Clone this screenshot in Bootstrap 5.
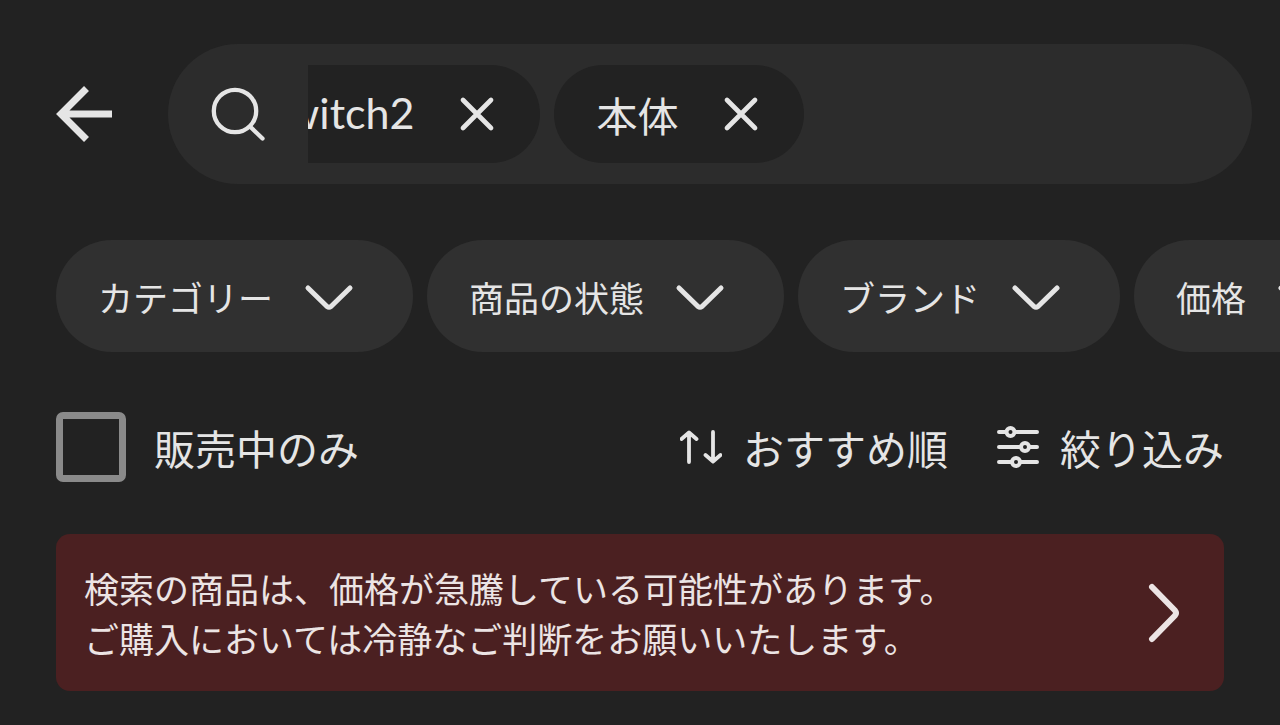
<!DOCTYPE html>
<html lang="ja">
<head>
<meta charset="utf-8">
<meta name="viewport" content="width=device-width, initial-scale=1">
<title>検索結果</title>
<link href="https://cdn.jsdelivr.net/npm/bootstrap@5.3.0/dist/css/bootstrap.min.css" rel="stylesheet">
<style>
  :root { --page: #222; --ink: #e5e5e5; --field: #2c2c2c; --pill: #303030; }
  body { background: var(--page); color: var(--ink); font-family: "Noto Sans CJK JP", sans-serif; font-size: 41px; line-height: 56px; }
  .plain { background: none; border: 0; padding: 0; color: inherit; white-space: nowrap; }
  svg { display: block; flex: none; fill: none; stroke: currentColor; stroke-linecap: round; stroke-linejoin: round; }
  .sharp { stroke-linecap: butt; stroke-linejoin: miter; }
  .topbar { padding: 44px 28px 0 56px; gap: 56px; }
  .search-field { background: var(--field); height: 140px; padding: 0 42px; gap: 42px; min-width: 0; }
  .terms { gap: 14px; overflow: hidden; min-width: 0; }
  .term { background: var(--page); height: 98px; padding: 0 35px 0 42px; gap: 35px; flex: none; }
  .term:first-child { margin-left: -87px; }
  .latin { font-family: Lato, "Noto Sans CJK JP", sans-serif; font-size: 43px; padding-bottom: 2px; }
  .query { background: none; border: 0; outline: 0; color: inherit; min-width: 0; }
  .filters { margin-top: 56px; padding-left: 56px; gap: 14px; overflow: hidden; }
  .filter { background: var(--pill); height: 112px; padding: 2px 56px 0 42px; gap: 28px; font-size: 35px; flex: none; }
  .tools { margin-top: 60px; padding: 0 56px; gap: 49px; }
  .tool { gap: 21px; }
  .form-check-input.tick { width: 70px; height: 70px; margin: 0 28px 0 0; border: 7px solid #8a8a8a; border-radius: 7px; background-color: transparent; flex: none; }
  .notice { margin: 52px 56px 34px; padding: 29px 44px 28px 28px; border-radius: 14px; background: #4b2021; color: #ece4e4; font-size: 35px; line-height: 50px; }
  .notice:hover { color: #ece4e4; }
</style>
</head>
<body>
<header class="topbar d-flex align-items-center">
  <button class="plain" type="button" aria-label="戻る">
    <svg class="sharp" width="56" height="56" viewBox="0 0 56 56" stroke-width="7"><path d="M30.500 2.500 5 28l25.500 25.500M5 28H56"/></svg>
  </button>
  <form class="search-field d-flex align-items-center flex-grow-1 rounded-pill" role="search">
    <svg width="56" height="56" viewBox="0 0 56 56" stroke-width="4.300"><circle cx="25" cy="25" r="21.200"/><path d="M40.500 41 52.500 52.500"/></svg>
    <div class="terms d-flex flex-grow-1">
      <div class="term d-flex align-items-center rounded-pill"><span class="latin">Switch2</span>
        <button class="plain" type="button" aria-label="Switch2を削除"><svg width="56" height="56" viewBox="0 0 56 56" stroke-width="4.700"><path d="M14 14 42 42M42 14 14 42"/></svg></button>
      </div>
      <div class="term d-flex align-items-center rounded-pill"><span>本体</span>
        <button class="plain" type="button" aria-label="本体を削除"><svg width="56" height="56" viewBox="0 0 56 56" stroke-width="4.700"><path d="M14 14 42 42M42 14 14 42"/></svg></button>
      </div>
      <input class="query flex-grow-1" type="text" aria-label="キーワード">
    </div>
  </form>
</header>

<main>
  <div class="filters d-flex">
    <button class="plain filter d-flex align-items-center rounded-pill" type="button">カテゴリー
      <svg width="56" height="56" viewBox="0 0 56 56" stroke-width="5"><path d="M7 19 26 37.500Q28 39 30 37.500L49 19"/></svg></button>
    <button class="plain filter d-flex align-items-center rounded-pill" type="button">商品の状態
      <svg width="56" height="56" viewBox="0 0 56 56" stroke-width="5"><path d="M7 19 26 37.500Q28 39 30 37.500L49 19"/></svg></button>
    <button class="plain filter d-flex align-items-center rounded-pill" type="button">ブランド
      <svg width="56" height="56" viewBox="0 0 56 56" stroke-width="5"><path d="M7 19 26 37.500Q28 39 30 37.500L49 19"/></svg></button>
    <button class="plain filter d-flex align-items-center rounded-pill" type="button">価格
      <svg width="56" height="56" viewBox="0 0 56 56" stroke-width="5"><path d="M7 19 26 37.500Q28 39 30 37.500L49 19"/></svg></button>
  </div>

  <div class="tools d-flex align-items-center">
    <div class="d-flex align-items-center me-auto">
      <input class="form-check-input tick" type="checkbox" id="onsale">
      <label for="onsale">販売中のみ</label>
    </div>
    <button class="plain tool d-flex align-items-center" type="button">
      <svg width="42" height="42" viewBox="0 0 42 42" stroke-width="3.800"><path d="M9 36V7M1.500 13 9 6.500l7.500 6.500M33 6V35M25.500 29l7.500 6.500 7.500-6.500"/></svg>おすすめ順</button>
    <button class="plain tool d-flex align-items-center" type="button">
      <svg width="42" height="42" viewBox="0 0 42 42" stroke-width="4"><path d="M2 6H9M18 6H40M2 21H23M32 21H40M2 36H14M23 36H40"/><circle cx="13.500" cy="6" r="4"/><circle cx="28" cy="21" r="4"/><circle cx="19" cy="36" r="4"/></svg>絞り込み</button>
  </div>

  <a class="notice d-flex align-items-center justify-content-between text-decoration-none" href="#">
    <span>検索の商品は、価格が急騰している可能性があります。<br>ご購入においては冷静なご判断をお願いいたします。</span>
    <svg width="32" height="60" viewBox="0 0 32 60" stroke-width="6"><path d="M4 4 27 27.500Q29 30 27 32.500L4 56"/></svg>
  </a>
</main>
<script src="https://cdn.jsdelivr.net/npm/bootstrap@5.3.0/dist/js/bootstrap.bundle.min.js"></script>
</body>
</html>
